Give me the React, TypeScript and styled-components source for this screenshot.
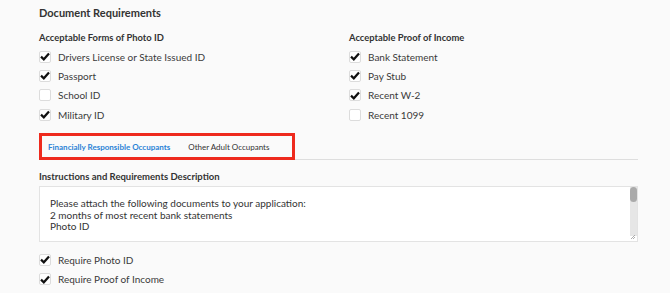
import React from "react";
import styled, { createGlobalStyle } from "styled-components";

const GlobalStyle = createGlobalStyle`
  html, body {
    margin: 0;
    padding: 0;
    background: #fafafa;
  }
  body {
    font-family: Lato, "Open Sans", sans-serif;
    color: #333;
  }
`;

const Page = styled.div`
  width: 599px;
  padding: 5px 0 0 39px;
`;

const Title = styled.h2`
  margin: 0;
  font-size: 11px;
  line-height: 16px;
  font-weight: 700;
  color: #333;
`;

const Columns = styled.div`
  display: grid;
  grid-template-columns: 310px 1fr;
  margin-top: 10px;
`;

const Heading = styled.div`
  font-size: 9.4px;
  font-weight: 700;
  line-height: 13px;
  color: #333;
  margin-bottom: 3px;
`;

const CheckRow = styled.label`
  display: flex;
  align-items: center;
  gap: 7px;
  height: 19.33px;
  font-size: 10px;
  color: #3a3a3a;
`;

const Box = styled.span`
  width: 12px;
  height: 12px;
  box-sizing: border-box;
  border: 1px solid #dcdcdc;
  border-radius: 2px;
  background: #fff;
  display: flex;
  align-items: center;
  justify-content: center;
`;

const TabBar = styled.div`
  display: flex;
  margin-top: 9px;
  border-bottom: 1px solid #dedede;
`;

const Highlight = styled.div`
  display: flex;
  align-items: center;
  gap: 18px;
  border: 3px solid #ee2a1d;
  height: 21px;
  padding: 0 6px;
  margin-bottom: -1px;
  width: 238px;
`;

const Tab = styled.span<{ $active?: boolean }>`
  font-size: 8px;
  font-weight: ${({ $active }) => ($active ? 700 : 400)};
  color: ${({ $active }) => ($active ? "#2b83d6" : "#333")};
  white-space: nowrap;
`;

const FieldLabel = styled.div`
  font-size: 9.5px;
  font-weight: 700;
  line-height: 12px;
  margin-top: 11px;
  color: #333;
`;

const TextBox = styled.div`
  position: relative;
  margin-top: 3px;
  height: 56px;
  box-sizing: border-box;
  background: #fff;
  border: 1px solid #e3e3e3;
  padding: 11px 20px 0 10px;
  font-size: 10px;
  line-height: 11.5px;
  color: #333;
`;

const Scrollbar = styled.div`
  position: absolute;
  top: 0;
  right: 0;
  width: 7px;
  height: 49px;
  background: #e6e6e6;
`;

const Thumb = styled.div`
  width: 7px;
  height: 15px;
  border-radius: 4px;
  background: #aaa;
`;

const Resize = styled.svg`
  position: absolute;
  right: 1px;
  bottom: 1px;
`;

const Bottom = styled.div`
  margin-top: 8px;
`;

const Check = ({ on, label }: { on: boolean; label: string }) => (
  <CheckRow>
    <Box>
      {on && (
        <svg width="10" height="9" viewBox="0 0 10 9">
          <path d="M1 4.6 L3.8 7.3 L9 1.4" fill="none" stroke="#111" strokeWidth="2.2" />
        </svg>
      )}
    </Box>
    {label}
  </CheckRow>
);

export default function App() {
  return (
    <Page>
      <GlobalStyle />
      <Title>Document Requirements</Title>
      <Columns>
        <div>
          <Heading>Acceptable Forms of Photo ID</Heading>
          <Check on label="Drivers License or State Issued ID" />
          <Check on label="Passport" />
          <Check on={false} label="School ID" />
          <Check on label="Military ID" />
        </div>
        <div>
          <Heading>Acceptable Proof of Income</Heading>
          <Check on label="Bank Statement" />
          <Check on label="Pay Stub" />
          <Check on label="Recent W-2" />
          <Check on={false} label="Recent 1099" />
        </div>
      </Columns>
      <TabBar>
        <Highlight>
          <Tab $active>Financially Responsible Occupants</Tab>
          <Tab>Other Adult Occupants</Tab>
        </Highlight>
      </TabBar>
      <FieldLabel>Instructions and Requirements Description</FieldLabel>
      <TextBox>
        Please attach the following documents to your application:
        <br />2 months of most recent bank statements
        <br />Photo ID
        <Scrollbar>
          <Thumb />
        </Scrollbar>
        <Resize width="6" height="6" viewBox="0 0 6 6">
          <path d="M5 1 L1 5 M5 3 L3 5" stroke="#999" strokeWidth="0.8" />
        </Resize>
      </TextBox>
      <Bottom>
        <Check on label="Require Photo ID" />
        <Check on label="Require Proof of Income" />
      </Bottom>
    </Page>
  );
}
